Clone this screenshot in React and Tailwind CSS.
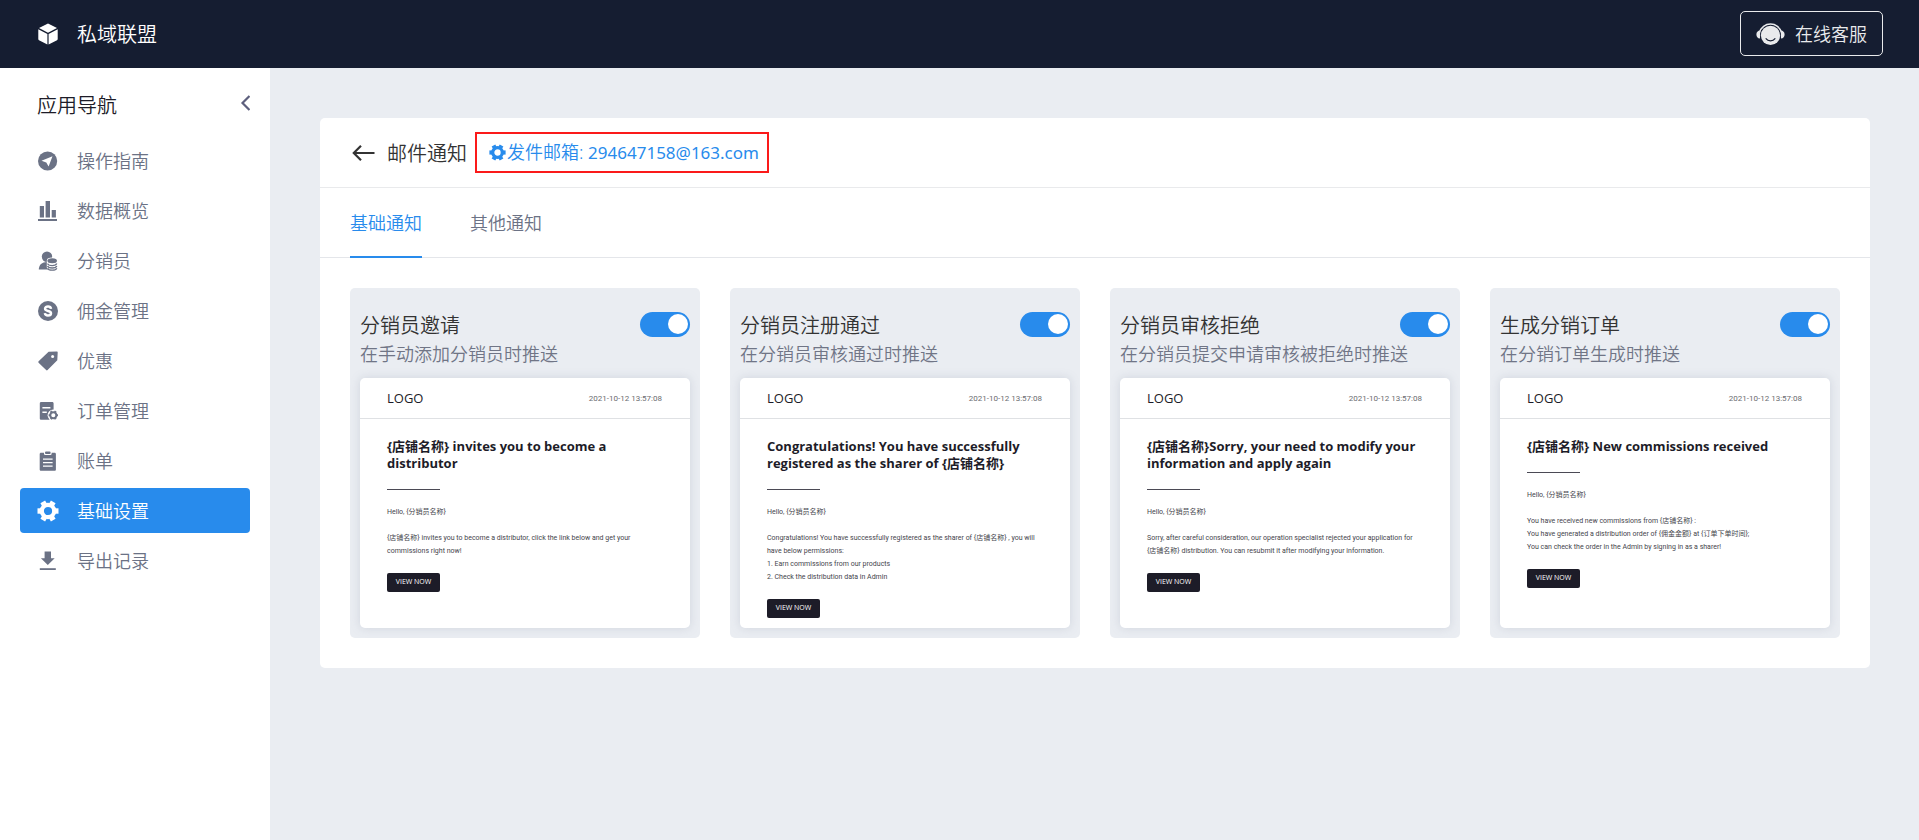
import { useState } from "react";
import clsx from "clsx";

function CubeIcon() {
  return (
    <svg width="20" height="22" viewBox="0 0 20 22" fill="currentColor" aria-hidden="true">
      <path d="M10 .4 19 5 10 9.7 1 5z" />
      <path d="M.3 6.3 9.4 11v10.6L1 17.2a1.3 1.3 0 0 1-.7-1.1z" />
      <path d="M19.7 6.3 10.6 11v10.6l8.4-4.4a1.3 1.3 0 0 0 .7-1.1z" />
    </svg>
  );
}

function HeadsetIcon() {
  return (
    <svg width="29" height="24" viewBox="0 0 29 24" aria-hidden="true">
      <circle cx="14.5" cy="13.4" r="9.6" fill="currentColor" />
      <path d="M3.5 10.5a11.4 11.4 0 0 1 22 0" fill="none" stroke="currentColor" strokeWidth="1.5" />
      <path d="M4.2 8.6C1.8 8.6.4 10.3.4 12.5s1.2 4 3.6 4.1zM24.8 8.6c2.400 0 3.800 1.700 3.800 3.900s-1.200 4-3.600 4.100z" fill="currentColor" />
      <path d="M10 16.600c2 3 7 3 9 0" fill="none" stroke="#151d31" strokeWidth="1.1" strokeLinecap="round" />
    </svg>
  );
}

function GearIcon({ size = 22 }) {
  return (
    <svg width={size} height={size} viewBox="0 0 22 22" fill="none" stroke="currentColor" aria-hidden="true">
      <circle cx="11" cy="11" r="6.2" strokeWidth="4.2" />
      <g strokeWidth="5.4">
        <path d="M18 11h3.5" />
        <path d="M18 11h3.5" transform="rotate(60 11 11)" />
        <path d="M18 11h3.5" transform="rotate(120 11 11)" />
        <path d="M18 11h3.5" transform="rotate(180 11 11)" />
        <path d="M18 11h3.5" transform="rotate(240 11 11)" />
        <path d="M18 11h3.5" transform="rotate(300 11 11)" />
      </g>
    </svg>
  );
}

function GuideIcon() {
  return (
    <svg width="20" height="20" viewBox="0 0 20 20" aria-hidden="true">
      <circle cx="9.6" cy="10" r="9.6" fill="currentColor" />
      <path d="M14.5 5.2 3.5 9.8l4.8 1.7 2.3 4z" fill="#fff" />
    </svg>
  );
}

function ChartIcon() {
  return (
    <svg width="20" height="20" viewBox="0 0 20 20" fill="currentColor" aria-hidden="true">
      <rect x="1.8" y="5" width="4.2" height="11.5" />
      <rect x="7.6" y="0" width="4.4" height="16.5" />
      <rect x="13.7" y="9" width="4.2" height="7.5" />
      <rect x="0" y="18" width="19" height="2" />
    </svg>
  );
}

function MemberIcon() {
  return (
    <svg width="20" height="20" viewBox="0 0 20 20" aria-hidden="true">
      <circle cx="9" cy="5.8" r="5.2" fill="currentColor" />
      <path d="M.8 18.6c0-4.800 3.200-7.600 8.200-7.600h3v7.600z" fill="currentColor" />
      <path d="M8.8 9.4c0-2 2.200-2.800 5.400-2.800s5.500.8 5.500 2.800v7.200c0 2-2.400 3-5.500 3s-5.400-1-5.400-3z" fill="#fff" />
      <ellipse cx="14.2" cy="9.8" rx="4.8" ry="2.5" fill="currentColor" />
      <path d="M9.6 12.6c.5 1.500 2.400 2 4.600 2s4-.5 4.600-2M9.600 15c.5 1.500 2.400 2 4.600 2s4-.5 4.600-2M9.600 17.200c.5 1.500 2.400 2 4.600 2s4-.5 4.600-2" fill="none" stroke="currentColor" strokeWidth="1.3" />
    </svg>
  );
}

function CoinIcon() {
  return (
    <svg width="20" height="20" viewBox="0 0 20 20" aria-hidden="true">
      <circle cx="10" cy="10" r="10" fill="currentColor" />
      <path d="M13 7.8C12.8 6.2 11.6 5.5 10 5.500S7.100 6.300 7.100 7.800C7.100 10.900 13 9 13 12.200c0 1.500-1.300 2.300-3 2.300s-2.900-.8-3.100-2.400" fill="none" stroke="#fff" strokeWidth="2.5" />
    </svg>
  );
}

function TagIcon() {
  return (
    <svg width="20" height="20" viewBox="0 0 20 20" aria-hidden="true">
      <path d="M10.6.8 18.6.4c.8 0 1.200.5 1.100 1.200l-.4 7.600L9.600 19c-.5.5-1 .5-1.500 0L.6 11.700c-.5-.5-.5-1 0-1.500z" fill="currentColor" />
      <circle cx="14.6" cy="5.5" r="1.5" fill="#fff" />
    </svg>
  );
}

function OrderIcon() {
  return (
    <svg width="20" height="20" viewBox="0 0 20 20" aria-hidden="true">
      <path d="M3.2 1h11c.8 0 1.400.6 1.400 1.400v15c0 .8-.6 1.400-1.400 1.400h-11c-.8 0-1.400-.6-1.400-1.400v-15C1.800 1.600 2.400 1 3.200 1z" fill="currentColor" />
      <path d="M4.4 6.8h8M4.4 11.2h4.400" stroke="#fff" strokeWidth="1.4" />
      <circle cx="15.3" cy="14.2" r="5.7" fill="#fff" />
      <circle cx="15.3" cy="14.2" r="3" fill="none" stroke="currentColor" strokeWidth="1.9" />
      <path d="M18.3 14.2h1.700M12.300 14.200h-1.700M16.900 11.500l.8-1.400M13.700 11.500l-.8-1.400M16.900 16.900l.8 1.400M13.700 16.900l-.8 1.400" stroke="currentColor" strokeWidth="2" />
    </svg>
  );
}

function BillIcon() {
  return (
    <svg width="20" height="20" viewBox="0 0 20 20" aria-hidden="true">
      <path d="M3 1.8h13.600c.8 0 1.300.6 1.300 1.300v15.400c0 .8-.5 1.300-1.300 1.300H3c-.8 0-1.300-.5-1.300-1.300V3.100c0-.7.500-1.300 1.300-1.300z" fill="currentColor" />
      <rect x="6" y="0" width="7.6" height="4" rx="1.2" fill="#fff" />
      <rect x="7" y=".4" width="5.6" height="2.6" rx="1" fill="currentColor" />
      <path d="M5 8.2h9.600M5 11.700h9.600M5 15.200h9.600" stroke="#fff" strokeWidth="1.2" />
    </svg>
  );
}

function ExportIcon() {
  return (
    <svg width="20" height="20" viewBox="0 0 20 20" fill="currentColor" aria-hidden="true">
      <path d="M6.6.5h6.400v6.800h3.700L9.800 14 2.900 7.300h3.700z" />
      <rect x="1.8" y="17.2" width="16" height="1.8" />
    </svg>
  );
}

function BackIcon() {
  return (
    <svg width="23" height="16" viewBox="0 0 23 16" fill="none" stroke="currentColor" strokeWidth="2.2" aria-hidden="true">
      <path d="M9 .8 1.8 8 9 15.2M1.800 8H22.500" />
    </svg>
  );
}

const navItems = [
  { label: "操作指南", icon: GuideIcon },
  { label: "数据概览", icon: ChartIcon },
  { label: "分销员", icon: MemberIcon },
  { label: "佣金管理", icon: CoinIcon },
  { label: "优惠", icon: TagIcon },
  { label: "订单管理", icon: OrderIcon },
  { label: "账单", icon: BillIcon },
  { label: "基础设置", icon: GearIcon, active: true },
  { label: "导出记录", icon: ExportIcon },
];

const notices = [
  {
    id: "invite",
    title: "分销员邀请",
    desc: "在手动添加分销员时推送",
    heading: ["{店铺名称} invites you to become a", "distributor"],
    body: [
      "{店铺名称} invites you to become a distributor, click the link below and get your",
      "commissions right now!",
    ],
  },
  {
    id: "approved",
    title: "分销员注册通过",
    desc: "在分销员审核通过时推送",
    heading: ["Congratulations! You have successfully", "registered as the sharer of {店铺名称}"],
    body: [
      "Congratulations! You have successfully registered as the sharer of {店铺名称} , you will",
      "have below permissions:",
      "1. Earn commissions from our products",
      "2. Check the distribution data in Admin",
    ],
  },
  {
    id: "rejected",
    title: "分销员审核拒绝",
    desc: "在分销员提交申请审核被拒绝时推送",
    heading: ["{店铺名称}Sorry, your need to modify your", "information and apply again"],
    body: [
      "Sorry, after careful consideration, our operation specialist rejected your application for",
      "{店铺名称} distribution. You can resubmit it after modifying your information.",
    ],
  },
  {
    id: "order",
    title: "生成分销订单",
    desc: "在分销订单生成时推送",
    heading: ["{店铺名称} New commissions received"],
    body: [
      "You have received new commissions from {店铺名称} :",
      "You have generated a distribution order of {佣金金额} at {订单下单时间};",
      "You can check the order in the Admin by signing in as a sharer!",
    ],
  },
];

function Switch({ id, checked, onChange }) {
  return (
    <input
      id={id}
      type="checkbox"
      role="switch"
      checked={checked}
      onChange={onChange}
      className="relative h-[25px] w-[50px] shrink-0 cursor-pointer appearance-none rounded-full bg-[#c5cad3] transition-colors checked:bg-[#288bec] before:absolute before:top-[2px] before:left-[2px] before:size-[20px] before:rounded-full before:bg-white before:transition-transform checked:before:translate-x-[26px]"
    />
  );
}

function EmailPreview({ heading, body }) {
  return (
    <div className="h-[250px] rounded-[5px] bg-white font-['Open_Sans','Noto_Sans_CJK_SC',sans-serif] font-normal shadow-[0_0_10px_rgba(130,140,165,0.25)]">
      <div className="flex h-[41px] items-center justify-between border-b border-[#dfe1e4] pt-[2px] pr-7 pl-[27px]">
        <span className="text-[13px] text-[#1d1c28]">LOGO</span>
        <span className="font-['Roboto',sans-serif] text-[8px] text-[#6b6b70]">2021-10-12 13:57:08</span>
      </div>
      <div className="px-[27px] pt-[19px]">
        <h3 className="text-[13px] leading-[17px] font-bold whitespace-nowrap text-[#1d1c28]">
          {heading.map((line) => (
            <span key={line} className="block">{line}</span>
          ))}
        </h3>
        <div className="mt-[17px] h-px w-[53px] bg-[#4b4a55]" />
        <div className="mt-4 font-['Roboto','Noto_Sans_CJK_SC',sans-serif] text-[7px] leading-[13px] whitespace-nowrap text-[#45454c]">
          <p>Hello, {"{分销员名称}"}</p>
          <div className="mt-[13px]">
            {body.map((line) => (
              <p key={line}>{line}</p>
            ))}
          </div>
        </div>
        <button type="button" className="mt-[15px] flex h-[19px] w-[53px] items-center justify-center rounded-[2px] bg-[#1d1c28] text-[7px] text-white">
          VIEW NOW
        </button>
      </div>
    </div>
  );
}

function NoticeCard({ notice }) {
  const [enabled, setEnabled] = useState(true);

  return (
    <section className="rounded-[5px] bg-[#eaedf2] px-[10px] pt-[14px] pb-[10px]">
      <div className="flex h-[45px] items-center justify-between">
        <label htmlFor={notice.id} className="pt-[2px] text-xl text-[#333]">{notice.title}</label>
        <Switch id={notice.id} checked={enabled} onChange={(e) => setEnabled(e.target.checked)} />
      </div>
      <p className="h-[31px] text-lg leading-[15px] whitespace-nowrap text-[#707586]">{notice.desc}</p>
      <EmailPreview heading={notice.heading} body={notice.body} />
    </section>
  );
}

export default function App() {
  const [tab, setTab] = useState("基础通知");

  return (
    <div className="flex min-h-screen flex-col bg-[#eaedf2] font-['Noto_Sans','Noto_Sans_CJK_SC',sans-serif] font-[350]">
      {/* top bar */}
      <header className="flex h-[68px] items-center justify-between bg-[#151d31] pr-9 pb-px pl-[38px] text-white">
        <div className="flex items-center gap-[19px]">
          <CubeIcon />
          <span className="pt-[2px] text-xl">私域联盟</span>
        </div>
        <button type="button" className="flex h-[45px] items-center gap-[10px] rounded-[5px] border border-[#e9eaec] px-[15px] text-lg text-[#e9eaec]">
          <HeadsetIcon />
          在线客服
        </button>
      </header>

      <div className="flex flex-1">
        {/* app navigation */}
        <aside className="w-[270px] shrink-0 bg-white px-5">
          <div className="flex h-[70px] items-center justify-between pl-[17px]">
            <h2 className="pt-[6px] text-xl text-[#1d1c28]">应用导航</h2>
            <button type="button" aria-label="收起" className="text-[#5d5f7d]">
              <svg width="10" height="16" viewBox="0 0 10 16" fill="none" stroke="currentColor" strokeWidth="2.2" aria-hidden="true">
                <path d="M9.5 1 2.5 8l7 7" />
              </svg>
            </button>
          </div>
          <nav className="flex flex-col gap-[5px]">
            {navItems.map(({ label, icon: Icon, active }) => (
              <a
                key={label}
                href="#"
                className={clsx(
                  "flex h-[45px] items-center rounded-[4px] pl-[17px] text-lg",
                  active ? "bg-[#288bec] text-white" : "text-[#6b7285]"
                )}
              >
                <span className="flex w-[22px] shrink-0 justify-center">
                  <Icon />
                </span>
                <span className="pl-[18px]">{label}</span>
              </a>
            ))}
          </nav>
        </aside>

        <main className="min-w-0 flex-1 pt-[50px] pr-[49px] pl-[50px]">
          <div className="rounded-[5px] bg-white pb-[30px]">
            <div className="flex h-[70px] items-center border-b border-[#e9eaec] px-8">
              <a href="#" aria-label="返回" className="text-[#333]">
                <BackIcon />
              </a>
              <h1 className="ml-3 pt-[2px] text-xl text-[#333]">邮件通知</h1>
              <a href="#" className="ml-2 flex h-[41px] items-center gap-px border-2 border-[#fb1a1a] pr-2 pl-3 text-lg text-[#288bec]">
                <GearIcon size={17} />
                <span>发件邮箱: <span className="text-[17px] font-normal">294647158@163.com</span></span>
              </a>
            </div>

            <div role="tablist" className="flex h-[70px] gap-12 border-b border-[#e4e6ea] px-[30px]">
              {["基础通知", "其他通知"].map((name) => (
                <button
                  key={name}
                  type="button"
                  role="tab"
                  aria-selected={tab === name}
                  onClick={() => setTab(name)}
                  className={clsx(
                    "-mb-px border-b-2 pt-[2px] text-lg",
                    tab === name ? "border-[#288bec] text-[#288bec]" : "border-transparent text-[#6b7285]"
                  )}
                >
                  {name}
                </button>
              ))}
            </div>

            <div className="grid grid-cols-4 gap-[30px] px-[30px] pt-[30px]">
              {notices.map((notice) => (
                <NoticeCard key={notice.id} notice={notice} />
              ))}
            </div>
          </div>
        </main>
      </div>
    </div>
  );
}
